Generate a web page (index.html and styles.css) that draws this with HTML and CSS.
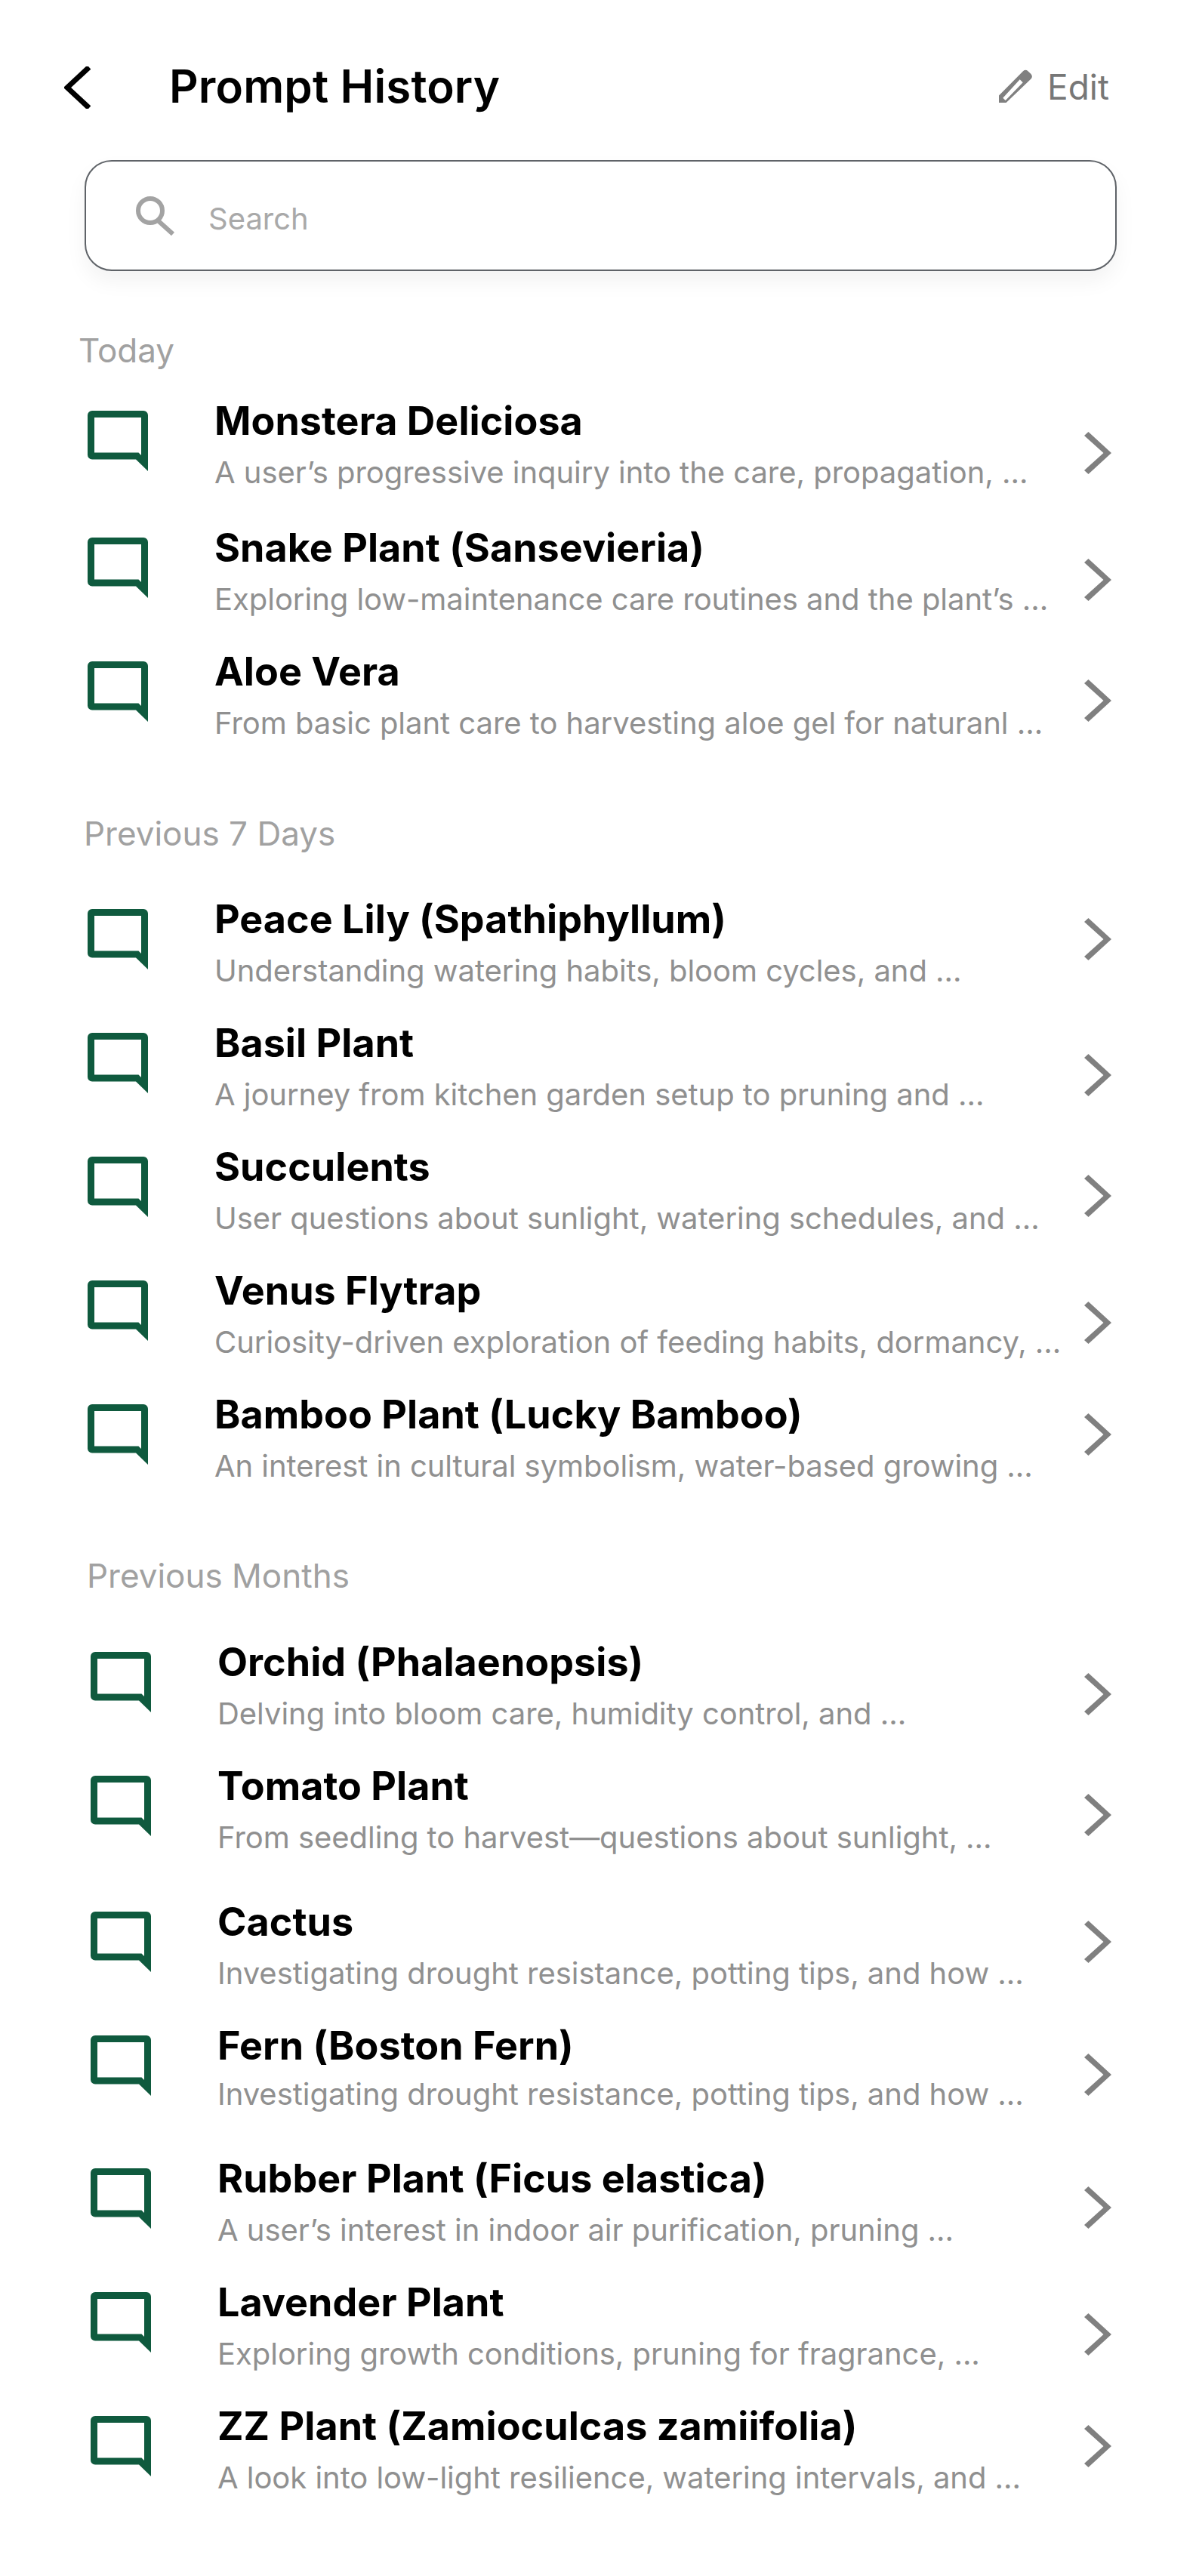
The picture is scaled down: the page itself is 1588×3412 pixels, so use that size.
FILE: index.html
```html
<!DOCTYPE html>
<html lang="en">
<head>
  <meta charset="UTF-8">
  <title>Prompt History</title>
  <link rel="stylesheet" href="styles.css">
</head>
<body>

  <svg class="defs" width="0" height="0">
    <symbol id="chat" viewBox="0 0 80 80">
      <path fill-rule="evenodd" d="M6 0H74a6 6 0 0 1 6 6V80L64 64.5H6a6 6 0 0 1-6-6V6a6 6 0 0 1 6-6ZM9 9V55.5H67.5L71 59V9Z"/>
    </symbol>
    <symbol id="chevron" viewBox="0 0 36 56">
      <polygon points="5.5,0 36,28 5.5,56 0,51 25.5,28 0,5"/>
    </symbol>
  </svg>

  <header class="topbar">
    <svg class="back" viewBox="0 0 35 56"><polyline points="33,1 4,28 33,55"/></svg>
    <h1>Prompt History</h1>
    <div class="edit">
      <svg class="pencil" viewBox="0 0 44 44">
        <path fill-rule="evenodd" d="M0 34.5L32 2.2a5 5 0 0 1 6.5 0L42.5 6a5 5 0 0 1 0 6.5L9.3 44.3H0ZM5.3 37.7L8.7 41L31.7 17.3L27.7 13.3Z"/>
      </svg>
      <span>Edit</span>
    </div>
  </header>

  <div class="search">
    <svg class="search-icon" viewBox="0 0 52 52">
      <circle cx="19" cy="19" r="16"/>
      <line x1="29" y1="32" x2="49" y2="50"/>
    </svg>
    <span class="search-text">Search</span>
  </div>

  <section class="group group-today">
    <h2>Today</h2>
    <div class="row gap-4">
      <svg class="chat"><use href="#chat"/></svg>
      <div class="text"><h3>Monstera Deliciosa</h3><p>A user’s progressive inquiry into the care, propagation, ...</p></div>
      <svg class="chev drop-16"><use href="#chevron"/></svg>
    </div>
    <div class="row">
      <svg class="chat"><use href="#chat"/></svg>
      <div class="text"><h3>Snake Plant (Sansevieria)</h3><p>Exploring low-maintenance care routines and the plant’s ...</p></div>
      <svg class="chev drop-16"><use href="#chevron"/></svg>
    </div>
    <div class="row">
      <svg class="chat"><use href="#chat"/></svg>
      <div class="text"><h3>Aloe Vera</h3><p>From basic plant care to harvesting aloe gel for naturanl ...</p></div>
      <svg class="chev drop-12"><use href="#chevron"/></svg>
    </div>
  </section>

  <section class="group group-week">
    <h2>Previous 7 Days</h2>
    <div class="row">
      <svg class="chat"><use href="#chat"/></svg>
      <div class="text"><h3>Peace Lily (Spathiphyllum)</h3><p>Understanding watering habits, bloom cycles, and ...</p></div>
      <svg class="chev"><use href="#chevron"/></svg>
    </div>
    <div class="row">
      <svg class="chat"><use href="#chat"/></svg>
      <div class="text"><h3>Basil Plant</h3><p>A journey from kitchen garden setup to pruning and ...</p></div>
      <svg class="chev drop-16"><use href="#chevron"/></svg>
    </div>
    <div class="row">
      <svg class="chat"><use href="#chat"/></svg>
      <div class="text"><h3>Succulents</h3><p>User questions about sunlight, watering schedules, and ...</p></div>
      <svg class="chev drop-12"><use href="#chevron"/></svg>
    </div>
    <div class="row">
      <svg class="chat"><use href="#chat"/></svg>
      <div class="text"><h3>Venus Flytrap</h3><p>Curiosity-driven exploration of feeding habits, dormancy, ...</p></div>
      <svg class="chev drop-16"><use href="#chevron"/></svg>
    </div>
    <div class="row">
      <svg class="chat"><use href="#chat"/></svg>
      <div class="text"><h3>Bamboo Plant (Lucky Bamboo)</h3><p>An interest in cultural symbolism, water-based growing ...</p></div>
      <svg class="chev"><use href="#chevron"/></svg>
    </div>
  </section>

  <section class="group group-months">
    <h2>Previous Months</h2>
    <div class="row">
      <svg class="chat"><use href="#chat"/></svg>
      <div class="text"><h3>Orchid (Phalaenopsis)</h3><p>Delving into bloom care, humidity control, and ...</p></div>
      <svg class="chev drop-16"><use href="#chevron"/></svg>
    </div>
    <div class="row gap-16">
      <svg class="chat"><use href="#chat"/></svg>
      <div class="text"><h3>Tomato Plant</h3><p>From seedling to harvest—questions about sunlight, ...</p></div>
      <svg class="chev drop-12"><use href="#chevron"/></svg>
    </div>
    <div class="row">
      <svg class="chat"><use href="#chat"/></svg>
      <div class="text"><h3>Cactus</h3><p>Investigating drought resistance, potting tips, and how ...</p></div>
      <svg class="chev"><use href="#chevron"/></svg>
    </div>
    <div class="row gap-12 tight">
      <svg class="chat"><use href="#chat"/></svg>
      <div class="text"><h3>Fern (Boston Fern)</h3><p>Investigating drought resistance, potting tips, and how ...</p></div>
      <svg class="chev drop-12"><use href="#chevron"/></svg>
    </div>
    <div class="row">
      <svg class="chat"><use href="#chat"/></svg>
      <div class="text"><h3>Rubber Plant (Ficus elastica)</h3><p>A user’s interest in indoor air purification, pruning ...</p></div>
      <svg class="chev drop-12"><use href="#chevron"/></svg>
    </div>
    <div class="row">
      <svg class="chat"><use href="#chat"/></svg>
      <div class="text"><h3>Lavender Plant</h3><p>Exploring growth conditions, pruning for fragrance, ...</p></div>
      <svg class="chev drop-16"><use href="#chevron"/></svg>
    </div>
    <div class="row">
      <svg class="chat"><use href="#chat"/></svg>
      <div class="text"><h3>ZZ Plant (Zamioculcas zamiifolia)</h3><p>A look into low-light resilience, watering intervals, and ...</p></div>
      <svg class="chev"><use href="#chevron"/></svg>
    </div>
  </section>

</body>
</html>
```
FILE: styles.css
```css
:root {
  --green: #0f5a3e;
  --chevron: #808080;
  --subtext: #909090;
  --label: #a1a1a1;
}

body {
  font-family: Inter, 'Noto Sans', sans-serif;
  background: #fff;
  margin: 0;
  padding-top: 78px;
  min-height: 3334px;
  color: #000;
}

.defs {
  position: absolute;
}

.topbar {
  display: flex;
  align-items: center;
  height: 72px;
  padding: 0 119px 0 85px;
}

.back {
  flex: none;
  width: 35px;
  height: 56px;
  margin-top: 4px;
  fill: none;
  stroke: #000;
  stroke-width: 7;
}

h1 {
  font-size: 60px;
  line-height: 72px;
  font-weight: 600;
  letter-spacing: 0.15px;
  margin: 0 0 0 104px;
}

.edit {
  display: flex;
  align-items: center;
  gap: 20px;
  margin-left: auto;
  font-size: 46px;
  color: #777;
}

.edit span {
  margin-top: 2px;
}

.pencil {
  width: 44px;
  height: 44px;
  fill: #808080;
}

.search {
  display: flex;
  align-items: center;
  box-sizing: border-box;
  height: 147px;
  margin: 62px 109px 0 112px;
  padding-left: 66px;
  gap: 44px;
  border: 2px solid #5f6368;
  border-radius: 36px;
  box-shadow: 0 14px 28px rgba(0,0,0,0.05);
  font-size: 40px;
  color: #a9a9a9;
}

.search-text {
  margin-top: 8px;
}

.search-icon {
  width: 52px;
  height: 52px;
  fill: none;
  stroke: #a3a3a3;
  stroke-width: 6;
}

h2 {
  font-size: 44px;
  line-height: 52px;
  font-weight: 400;
  color: var(--label);
  margin: 0;
}

.group-today {
  margin-top: 79px;
  padding-left: 104px;
}

.group-today h2 {
  margin-bottom: 37px;
}

.group-today .row {
  margin-left: 12px;
}

.group-week {
  margin-top: 55px;
  padding-left: 111px;
}

.group-week h2 {
  margin-bottom: 57px;
}

.group-week .row {
  margin-left: 5px;
}

.group-months {
  margin-top: 54px;
  padding-left: 115px;
}

.group-months h2 {
  margin-bottom: 58px;
}

.group-months .row {
  margin-left: 5px;
}

.row {
  display: flex;
  align-items: flex-start;
  height: 164px;
  padding-right: 116px;
}

.gap-4 { margin-bottom: 4px; }
.gap-12 { margin-bottom: 12px; }
.gap-16 { margin-bottom: 16px; }

.chat {
  flex: none;
  width: 80px;
  height: 80px;
  margin-top: 17px;
  fill: var(--green);
}

.text {
  flex: 1;
  margin-left: 88px;
  padding-top: 1px;
  white-space: nowrap;
}

h3 {
  font-size: 52px;
  line-height: 60px;
  font-weight: 700;
  letter-spacing: 0.05px;
  margin: 0;
}

.text p {
  font-size: 40px;
  line-height: 46px;
  letter-spacing: -0.04px;
  color: var(--subtext);
  margin: 15px 0 0;
}

.tight .text p {
  margin-top: 11px;
}

.chev {
  flex: none;
  width: 36px;
  height: 56px;
  margin-top: 29px;
  fill: var(--chevron);
}

.chev.drop-12 { margin-top: 41px; }
.chev.drop-16 { margin-top: 45px; }
```
